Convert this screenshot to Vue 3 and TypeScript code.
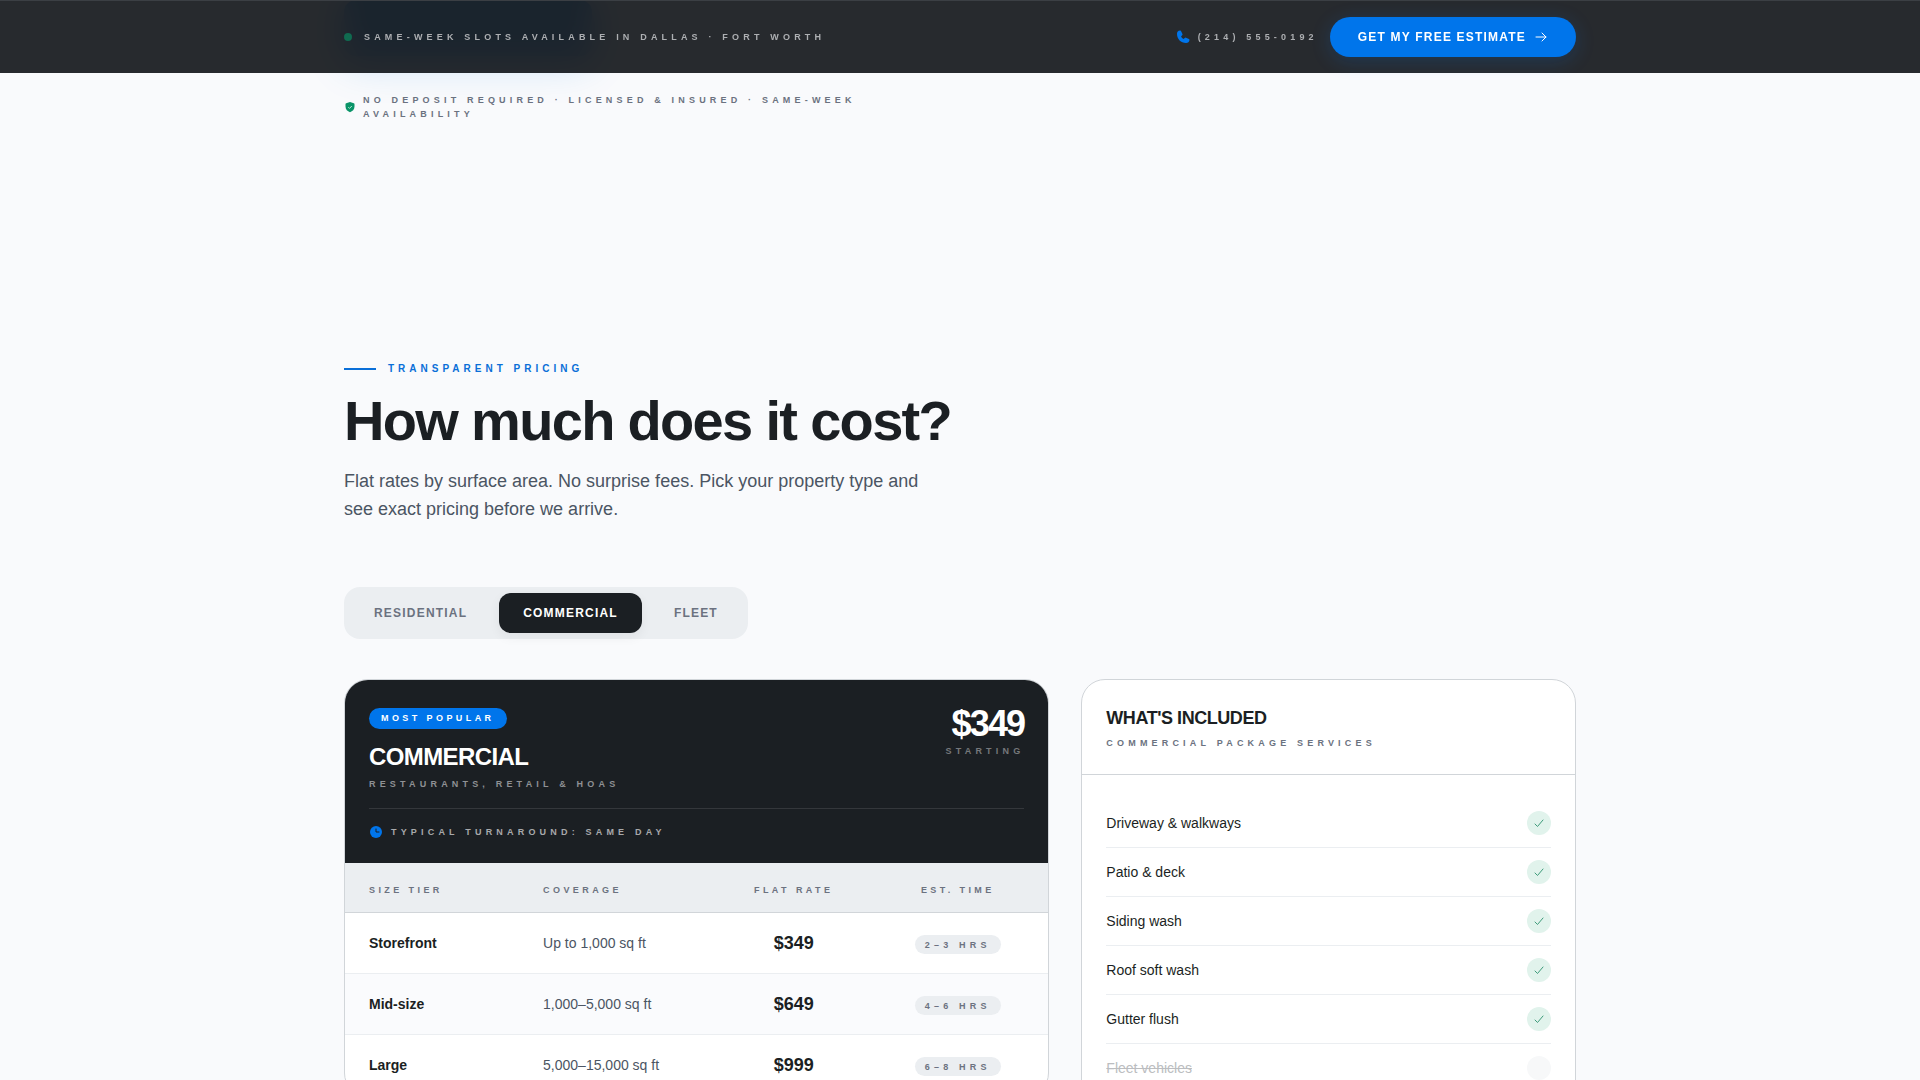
<script setup lang="ts">
import { computed, ref } from 'vue'

interface Tier { name: string; coverage: string; rate: string; time: string }
interface Plan {
  id: string
  label: string
  audience: string
  price: string
  turnaround: string
  popular: boolean
  tiers: Tier[]
  excluded: string[]
}

const services = ['Driveway & walkways', 'Patio & deck', 'Siding wash', 'Roof soft wash', 'Gutter flush', 'Fleet vehicles']

const plans: Plan[] = [
  {
    id: 'residential', label: 'Residential', audience: 'Homes & townhouses', price: '$149', turnaround: 'Same day', popular: false,
    tiers: [
      { name: 'Small', coverage: 'Up to 1,500 sq ft', rate: '$149', time: '1–2 hrs' },
      { name: 'Medium', coverage: '1,500–3,000 sq ft', rate: '$249', time: '2–3 hrs' },
      { name: 'Large', coverage: '3,000–5,000 sq ft', rate: '$399', time: '3–5 hrs' },
    ],
    excluded: ['Fleet vehicles'],
  },
  {
    id: 'commercial', label: 'Commercial', audience: 'Restaurants, retail & HOAs', price: '$349', turnaround: 'Same day', popular: true,
    tiers: [
      { name: 'Storefront', coverage: 'Up to 1,000 sq ft', rate: '$349', time: '2–3 hrs' },
      { name: 'Mid-size', coverage: '1,000–5,000 sq ft', rate: '$649', time: '4–6 hrs' },
      { name: 'Large', coverage: '5,000–15,000 sq ft', rate: '$999', time: '6–8 hrs' },
    ],
    excluded: ['Fleet vehicles'],
  },
  {
    id: 'fleet', label: 'Fleet', audience: 'Trucks, vans & trailers', price: '$199', turnaround: 'Same day', popular: false,
    tiers: [
      { name: 'Small', coverage: 'Up to 5 vehicles', rate: '$199', time: '1–2 hrs' },
      { name: 'Medium', coverage: '6–15 vehicles', rate: '$449', time: '3–5 hrs' },
      { name: 'Large', coverage: '16–30 vehicles', rate: '$799', time: '5–8 hrs' },
    ],
    excluded: ['Driveway & walkways', 'Patio & deck', 'Siding wash', 'Roof soft wash', 'Gutter flush'],
  },
]

const activeId = ref('commercial')
const plan = computed<Plan>(() => plans.find((p) => p.id === activeId.value) ?? plans[1])
</script>

<template>
  <div class="page">
    <header class="topbar">
      <div class="container topbar-row">
        <p class="slots micro"><span class="dot"></span>Same-week slots available in Dallas · Fort Worth</p>
        <div class="actions">
          <a class="phone micro" href="tel:+12145550192">
            <svg width="16" height="16" viewBox="0 0 256 256" aria-hidden="true">
              <path fill="#0075eb" d="M232 175a56 56 0 0 1-56 49C96 224 32 160 32 80a56 56 0 0 1 49-56 16 16 0 0 1 17 10l21 47a16 16 0 0 1-1 15l-21 25c8 16 24 32 39 39l25-21a16 16 0 0 1 15-1l47 21a16 16 0 0 1 9 16Z" />
            </svg>
            (214) 555-0192
          </a>
          <a class="cta" href="#estimate">
            Get my free estimate
            <svg width="14" height="14" viewBox="0 0 14 14" fill="none" stroke="currentColor" stroke-linecap="round" stroke-linejoin="round" aria-hidden="true">
              <path d="M2 7h10M8 3l4 4-4 4" />
            </svg>
          </a>
        </div>
      </div>
    </header>

    <section class="hero container">
      <div class="glow"></div>
      <p class="assurance micro">
        <svg width="12" height="12" viewBox="0 0 12 12" aria-hidden="true">
          <path fill="#0a9468" d="M6 1 9.800 2.200Q10.500 2.400 10.500 3.200V5.500C10.500 8.500 8.500 10.300 6 11.200 3.500 10.300 1.500 8.500 1.500 5.500V3.200Q1.500 2.400 2.200 2.200Z" />
          <path d="m4.300 6.200 1.200 1.200L7.800 5" fill="none" stroke="#b5ecd8" />
        </svg>
        <span>No deposit required · Licensed &amp; insured · Same-week availability</span>
      </p>
    </section>

    <main class="container pricing">
      <p class="eyebrow">Transparent pricing</p>
      <h1>How much does it cost?</h1>
      <p class="lead">Flat rates by surface area. No surprise fees. Pick your property type and see exact pricing before we arrive.</p>

      <div class="tabs" role="tablist" aria-label="Property type">
        <button
          v-for="p in plans"
          :key="p.id"
          type="button"
          role="tab"
          :aria-selected="p.id === activeId"
          :class="['tab', { active: p.id === activeId }]"
          @click="activeId = p.id"
        >{{ p.label }}</button>
      </div>

      <div class="grid">
        <section class="card plan">
          <div class="plan-head">
            <div class="plan-top">
              <div>
                <span v-if="plan.popular" class="badge">Most popular</span>
                <h2>{{ plan.label }}</h2>
                <p class="micro audience">{{ plan.audience }}</p>
              </div>
              <div class="price">
                <strong>{{ plan.price }}</strong>
                <span class="micro">Starting</span>
              </div>
            </div>
            <p class="micro turnaround">
              <svg width="14" height="14" viewBox="0 0 14 14" aria-hidden="true">
                <circle cx="7" cy="7" r="6" fill="#0075eb" />
                <path d="M7 4v3h3" fill="none" stroke="#1b1f23" stroke-linecap="round" />
              </svg>
              Typical turnaround: {{ plan.turnaround }}
            </p>
          </div>
          <table>
            <colgroup><col class="c-tier" /><col class="c-coverage" /><col class="c-rate" /><col class="c-time" /></colgroup>
            <thead>
              <tr><th>Size tier</th><th>Coverage</th><th class="mid">Flat rate</th><th class="mid">Est. time</th></tr>
            </thead>
            <tbody>
              <tr v-for="t in plan.tiers" :key="t.name">
                <td class="tier">{{ t.name }}</td>
                <td class="coverage">{{ t.coverage }}</td>
                <td class="mid rate">{{ t.rate }}</td>
                <td class="mid"><span class="micro time">{{ t.time }}</span></td>
              </tr>
            </tbody>
          </table>
        </section>

        <section class="card included">
          <div class="included-head">
            <h3>What's included</h3>
            <p class="micro">{{ plan.label }} package services</p>
          </div>
          <ul>
            <li v-for="s in services" :key="s" :class="{ off: plan.excluded.includes(s) }">
              <span class="service">{{ s }}</span>
              <span class="mark">
                <svg v-if="!plan.excluded.includes(s)" width="12" height="12" viewBox="0 0 12 12" fill="none" stroke="#3f9c7b" stroke-linecap="round" stroke-linejoin="round" aria-hidden="true">
                  <path d="m2 7 2.500 2.500L10 3" />
                </svg>
              </span>
            </li>
          </ul>
        </section>
      </div>
    </main>
  </div>
</template>

<style>
body {
  margin: 0;
  background: #f9fafc;
}
</style>

<style scoped>
.page {
  min-height: 100vh;
  overflow: hidden;
  background: #f9fafc;
  color: #1b1f23;
  font-family: "Liberation Sans", Arial, sans-serif;
}
p, h1, h2, h3, ul {
  margin: 0;
  padding: 0;
}
svg {
  flex: none;
}
.container {
  box-sizing: border-box;
  max-width: 1280px;
  margin: 0 auto;
  padding: 0 24px;
}
.micro {
  font-size: 9px;
  line-height: 14px;
  font-weight: 700;
  letter-spacing: 0.465em;
  text-transform: uppercase;
}

.topbar {
  position: fixed;
  inset: 0 0 auto;
  z-index: 10;
  border-top: 1px solid #3b3f44;
  background: rgba(27, 31, 35, 0.95);
  backdrop-filter: blur(16px);
}
.topbar-row {
  display: flex;
  align-items: center;
  justify-content: space-between;
  padding-top: 16px;
  padding-bottom: 16px;
}
.slots {
  display: flex;
  align-items: center;
  gap: 12px;
  color: #adafb2;
}
.dot {
  width: 8px;
  height: 8px;
  border-radius: 50%;
  background: #106b50;
}
.actions {
  display: flex;
  align-items: center;
  gap: 12px;
}
.phone {
  display: flex;
  align-items: center;
  gap: 7px;
  color: #adafb2;
  text-decoration: none;
}
.cta {
  display: flex;
  align-items: center;
  gap: 8px;
  height: 40px;
  padding: 0 28px;
  border-radius: 20px;
  background: #0075eb;
  box-shadow: 0 4px 20px rgba(0, 117, 235, 0.2);
  color: #fff;
  font-size: 12px;
  font-weight: 700;
  letter-spacing: 0.1em;
  text-decoration: none;
  text-transform: uppercase;
}

.hero {
  position: relative;
  padding-top: 93px;
}
.glow {
  position: absolute;
  top: 0;
  left: 24px;
  width: 248px;
  height: 56px;
  border-radius: 12px;
  background: #0084eb;
  box-shadow: 0 8px 40px rgba(0, 125, 225, 0.2);
}
.assurance {
  display: flex;
  align-items: center;
  gap: 7px;
  max-width: 576px;
  color: #6b7280;
}

.pricing {
  padding-top: 240px;
  padding-bottom: 96px;
}
.eyebrow {
  display: flex;
  align-items: center;
  gap: 12px;
  color: #0a6fd8;
  font-size: 10px;
  line-height: 16px;
  font-weight: 700;
  letter-spacing: 0.4em;
  text-transform: uppercase;
}
.eyebrow::before {
  content: "";
  width: 32px;
  height: 2px;
  background: #0a6fd8;
}
h1 {
  margin-top: 16px;
  font-size: 56px;
  line-height: 56px;
  letter-spacing: -0.03em;
}
.lead {
  max-width: 576px;
  margin-top: 18px;
  color: #4b5563;
  font-size: 18px;
  line-height: 28px;
}
.tabs {
  display: flex;
  gap: 8px;
  width: fit-content;
  margin-top: 64px;
  padding: 6px;
  border-radius: 16px;
  background: #ebeef1;
}
.tab {
  height: 40px;
  padding: 0 24px;
  border: 0;
  border-radius: 12px;
  background: none;
  color: #6b7280;
  font: 700 12px "Liberation Sans", Arial, sans-serif;
  letter-spacing: 0.1em;
  text-transform: uppercase;
  cursor: pointer;
}
.tab.active {
  background: #1b1f23;
  box-shadow: 0 4px 12px rgba(27, 31, 35, 0.06);
  color: #fff;
}

.grid {
  display: grid;
  grid-template-columns: repeat(12, minmax(0, 1fr));
  gap: 32px;
  align-items: start;
  margin-top: 40px;
}
.card {
  overflow: hidden;
  border: 1px solid #d1d5d9;
  border-radius: 24px;
  background: #fff;
}
.plan {
  grid-column: span 7;
}
.included {
  grid-column: span 5;
}
.plan-head {
  padding: 28px 24px 24px;
  background: #1b1f23;
  color: #fff;
}
.plan-top {
  display: flex;
  align-items: flex-start;
  justify-content: space-between;
}
.badge {
  display: block;
  width: fit-content;
  padding: 4px 12px;
  border-radius: 12px;
  background: #0075eb;
  font-size: 9px;
  line-height: 13px;
  font-weight: 700;
  letter-spacing: 0.38em;
  text-transform: uppercase;
}
h2 {
  margin-top: 12px;
  font-size: 24px;
  line-height: 32px;
  letter-spacing: -0.025em;
  text-transform: uppercase;
}
.audience {
  margin-top: 4px;
  color: #8f9194;
}
.price {
  display: flex;
  flex-direction: column;
  align-items: flex-end;
}
.price strong {
  font-size: 36px;
  line-height: 32px;
  letter-spacing: -0.05em;
}
.price .micro {
  margin-top: 4px;
  color: #76787b;
}
.turnaround {
  display: flex;
  align-items: center;
  gap: 8px;
  margin-top: 17px;
  padding-top: 16px;
  border-top: 1px solid #34373b;
  color: #a8a9ab;
}

table {
  width: 100%;
  border-collapse: collapse;
  table-layout: fixed;
}
.c-tier { width: 174px; }
.c-coverage { width: 201px; }
.c-rate { width: 147px; }
.c-time { width: 181px; }
th, td {
  padding: 0 24px;
  text-align: left;
}
th.mid, td.mid {
  padding-left: 0;
  padding-right: 0;
  text-align: center;
}
th {
  height: 45px;
  padding-top: 4px;
  border-bottom: 1px solid #d1d5d9;
  background: #ebeef1;
  color: #6b7280;
  font-size: 9px;
  line-height: 14px;
  letter-spacing: 0.38em;
  text-transform: uppercase;
}
td {
  height: 60px;
  border-bottom: 1px solid #ebeef1;
  font-size: 14px;
  line-height: 20px;
}
tbody tr:nth-child(even) {
  background: #fafbfd;
}
.tier {
  font-weight: 700;
}
.coverage {
  color: #4b5563;
}
td.rate {
  font-size: 18px;
  font-weight: 700;
}
.time {
  display: inline-block;
  padding: 3px 10px 2px;
  border-radius: 10px;
  background: #ebeef1;
  color: #6b7280;
}

.included-head {
  padding: 24px;
  border-bottom: 1px solid #d1d5d9;
}
h3 {
  font-size: 18px;
  line-height: 28px;
  letter-spacing: -0.025em;
  text-transform: uppercase;
}
.included-head p {
  margin-top: 4px;
  color: #6b7280;
}
ul {
  padding: 24px;
  list-style: none;
}
li {
  display: flex;
  align-items: center;
  justify-content: space-between;
  height: 48px;
  border-bottom: 1px solid #ebeef1;
}
.service {
  font-size: 14px;
  line-height: 20px;
}
.mark {
  display: flex;
  align-items: center;
  justify-content: center;
  width: 24px;
  height: 24px;
  border-radius: 50%;
  background: #e1f3ec;
}
.off .service {
  color: #bbbdc0;
  text-decoration: line-through;
}
.off .mark {
  background: #f7f8f9;
}
</style>
